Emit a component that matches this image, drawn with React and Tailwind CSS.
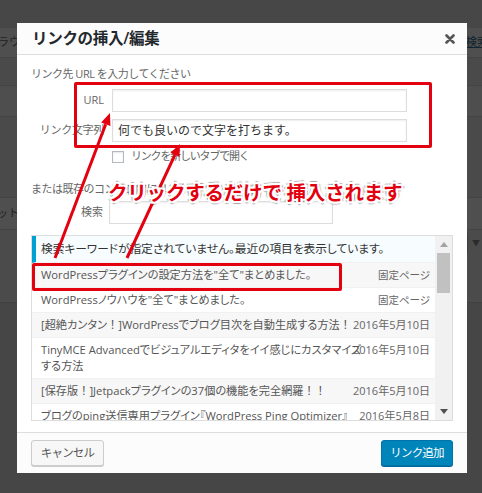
import React from "react";

const rows = [
  { t: 'WordPressプラグインの設定方法を"全て"まとめました。', i: "固定ページ" },
  { t: 'WordPressノウハウを"全て"まとめました。', i: "固定ページ" },
  { t: "[超絶カンタン！]WordPressでブログ目次を自動生成する方法！", i: "2016年5月10日" },
  { t: "TinyMCE Advancedでビジュアルエディタをイイ感じにカスタマイズ", t2: "する方法", i: "2016年5月10日" },
  { t: "[保存版！]Jetpackプラグインの37個の機能を完全網羅！！", i: "2016年5月10日" },
  { t: "ブログのping送信専用プラグイン『WordPress Ping Optimizer』", i: "2016年5月8日" },
];

function Wide({ text }) {
  const parts = text.split(/(！)/);
  return parts.map((p, i) =>
    p === "！" ? (
      <span key={i} className="[font-feature-settings:normal]">
        ！
      </span>
    ) : (
      <React.Fragment key={i}>{p}</React.Fragment>
    )
  );
}

function Background() {
  return (
    <div className="flex flex-col w-full h-full text-[11px] text-[#222]">
      <div className="h-[28px] bg-[#474747]" />
      <div className="h-[30px] bg-[#4f4f4f] border-b border-[#444] flex items-center justify-between">
        <span className="-ml-[2px]">ラウ</span>
        <span className="underline text-[#10232e] mr-[-6px]">検索</span>
      </div>
      <div className="h-[28px] bg-[#4a4a4a] border-b border-[#444]" />
      <div className="h-[31px] bg-[#4e4e4e] border-b border-[#444]" />
      <div className="h-[81px] bg-[#4a4a4a] border-b border-[#444]" />
      <div className="h-[32px] bg-[#4f4f4f] border-b border-[#444] flex items-center">
        <span className="-ml-[3px]">ット</span>
      </div>
      <div className="h-[73px] bg-[#4b4b4b] border-b border-[#404040] flex items-start justify-end pt-[3px]">
        <div className="flex items-center h-[20px] border-l border-[#3e3e3e] pl-[4px] pr-[2px] text-[8px] text-[#2a2a2a]">▼</div>
      </div>
      <div className="flex-1 bg-[#464646]" />
    </div>
  );
}

function Row({ r, idx }) {
  const alt = idx % 2 === 0;
  const isPage = r.i === "固定ページ";
  return (
    <div
      className={
        "relative flex items-start justify-between border-b border-[#f1f1f1] pl-[9px] pr-[5px] py-[4px] leading-[16px] " +
        (alt ? "bg-[#f7f7f7]" : "bg-white")
      }
    >
      <div className="min-w-0 flex-1 whitespace-nowrap text-[11.2px] [font-feature-settings:'palt'] text-[#555] relative z-10">
        <Wide text={r.t} />
        {r.t2 && (
          <>
            <br />
            {r.t2}
          </>
        )}
      </div>
      <div
        className={
          "shrink-0 text-[#666] pl-[2px] " +
          (isPage ? "text-[10.5px] [font-feature-settings:'palt']" : "text-[11px]")
        }
      >
        {r.i}
      </div>
    </div>
  );
}

function Dialog() {
  return (
    <div className="absolute left-[17px] top-[23px] w-[450px] h-[450px] bg-white flex flex-col">
      {/* header */}
      <div className="h-[32px] shrink-0 border-b border-[#ddd] flex items-center justify-between pl-[15px] pr-[12px] bg-[#fcfcfc]">
        <div className="text-[15.5px] font-semibold text-[#23282d] tracking-[-0.3px]">リンクの挿入/編集</div>
        <svg width="10" height="10" viewBox="0 0 10 10" className="mt-[1px]">
          <path d="M1.5 1.5 L8.5 8.5 M8.5 1.5 L1.5 8.5" stroke="#555" strokeWidth="2.6" strokeLinecap="round" />
        </svg>
      </div>
      {/* body */}
      <div className="flex-1 flex flex-col px-[14px] text-[11px] text-[#666]">
        <div className="mt-[11px] leading-[16px] tracking-[-0.5px]">リンク先 URL を入力してください</div>
        <div className="mt-[7px] flex items-center h-[23px]">
          <div className="w-[73px] text-right">URL</div>
          <div className="ml-[8px] w-[295px] h-[23px] border border-[#ddd] shadow-[inset_0_1px_2px_rgba(0,0,0,0.07)]" />
        </div>
        <div className="mt-[7px] flex items-center h-[23px]">
          <div className="w-[73px] text-right tracking-[-0.3px]">リンク文字列</div>
          <div className="ml-[8px] w-[295px] h-[23px] border border-[#ddd] shadow-[inset_0_1px_2px_rgba(0,0,0,0.07)] flex items-center pl-[5px] text-[12px] text-[#333]">
            何でも良いので文字を打ちます。
          </div>
        </div>
        <div className="mt-[8px] flex items-center h-[13px] pl-[81px]">
          <div className="w-[12px] h-[12px] border border-[#b4b9be] bg-white shadow-[inset_0_1px_2px_rgba(0,0,0,0.1)]" />
          <div className="ml-[7px] tracking-[-1.2px]">リンクを新しいタブで開く</div>
        </div>
        <div className="mt-[18px] leading-[16px] tracking-[-0.5px]">または既存のコンテンツにリンク</div>
        <div className="mt-[4px] flex items-center h-[23px]">
          <div className="w-[72px] text-right">検索</div>
          <div className="ml-[6px] w-[224px] h-[23px] border border-[#ddd] shadow-[inset_0_1px_2px_rgba(0,0,0,0.07)]" />
        </div>
        {/* list */}
        <div className="mt-[11px] h-[186px] border border-[#ddd] flex overflow-hidden">
          <div className="flex-1 min-w-0 flex flex-col overflow-hidden">
            <div className="h-[27px] shrink-0 border-l-[4px] border-[#00a0d2] bg-[#f7fcfe] flex items-center pl-[5px] text-[11.7px] [font-feature-settings:'palt'] text-[#333] border-b border-b-[#f1f1f1]">
              検索キーワードが指定されていません。最近の項目を表示しています。
            </div>
            {rows.map((r, i) => (
              <Row key={i} r={r} idx={i} />
            ))}
          </div>
          <div className="w-[17px] shrink-0 bg-[#f1f1f1] flex flex-col items-center">
            <div className="h-[17px] flex items-center justify-center">
              <svg width="8" height="5" viewBox="0 0 8 5"><path d="M0 5 L4 0 L8 5 Z" fill="#a3a3a3" /></svg>
            </div>
            <div className="w-[13px] h-[40px] bg-[#c1c1c1]" />
            <div className="flex-1" />
            <div className="h-[17px] flex items-center justify-center">
              <svg width="8" height="5" viewBox="0 0 8 5"><path d="M0 0 L8 0 L4 5 Z" fill="#505050" /></svg>
            </div>
          </div>
        </div>
      </div>
      {/* footer */}
      <div className="h-[41px] shrink-0 border-t border-[#ddd] bg-[#fcfcfc] flex items-start justify-between px-[14px] pt-[7px]">
        <div className="w-[73px] h-[26px] rounded-[3px] border border-[#ccc] bg-[#f7f7f7] shadow-[0_1px_0_#ccc] flex items-center justify-center text-[11.5px] text-[#555] tracking-[-0.8px]">
          キャンセル
        </div>
        <div className="w-[72px] h-[26px] rounded-[3px] border border-[#0073aa] bg-[#0085ba] shadow-[0_1px_0_#006799] flex items-center justify-center text-[11.5px] text-white tracking-[-0.8px]">
          リンク追加
        </div>
      </div>
    </div>
  );
}

function Annotations() {
  return (
    <>
      <div className="absolute left-[74px] top-[82px] w-[358px] h-[66px] border-[3px] border-[#e3000f] rounded-[2px]" />
      <div className="absolute left-[32px] top-[263px] w-[310px] h-[28px] border-[3px] border-[#e3000f] rounded-[2px]" />
      <svg className="absolute inset-0 pointer-events-none" width="482" height="493" viewBox="0 0 482 493">
        <line x1="55" y1="258" x2="105.7" y2="124.2" stroke="#e3000f" strokeWidth="3" />
        <polygon points="110,113 110.4,126 101.1,122.5" fill="#e3000f" />
        <line x1="127" y1="258" x2="174.9" y2="154.9" stroke="#e3000f" strokeWidth="3" />
        <polygon points="180,144 179.5,157 170.4,152.8" fill="#e3000f" />
      </svg>
      <div className="absolute left-[108px] top-[179px] whitespace-nowrap text-[19.5px] font-bold leading-[28px] text-[#e3000f] tracking-[-0.2px] [text-shadow:2px_0_0_#fff,-2px_0_0_#fff,0_2px_0_#fff,0_-2px_0_#fff,2px_2px_0_#fff,-2px_-2px_0_#fff,2px_-2px_0_#fff,-2px_2px_0_#fff,3px_0_1px_rgba(0,0,0,0.35),-3px_0_1px_rgba(0,0,0,0.35),0_3px_1px_rgba(0,0,0,0.35),0_-3px_1px_rgba(0,0,0,0.35)]">
        クリックするだけで 挿入されます
      </div>
    </>
  );
}

export default function App() {
  return (
    <div className="relative w-[482px] h-[493px] overflow-hidden bg-[#464646] font-['Open_Sans','Noto_Sans_CJK_JP',sans-serif]">
      <Background />
      <Dialog />
      <Annotations />
    </div>
  );
}
